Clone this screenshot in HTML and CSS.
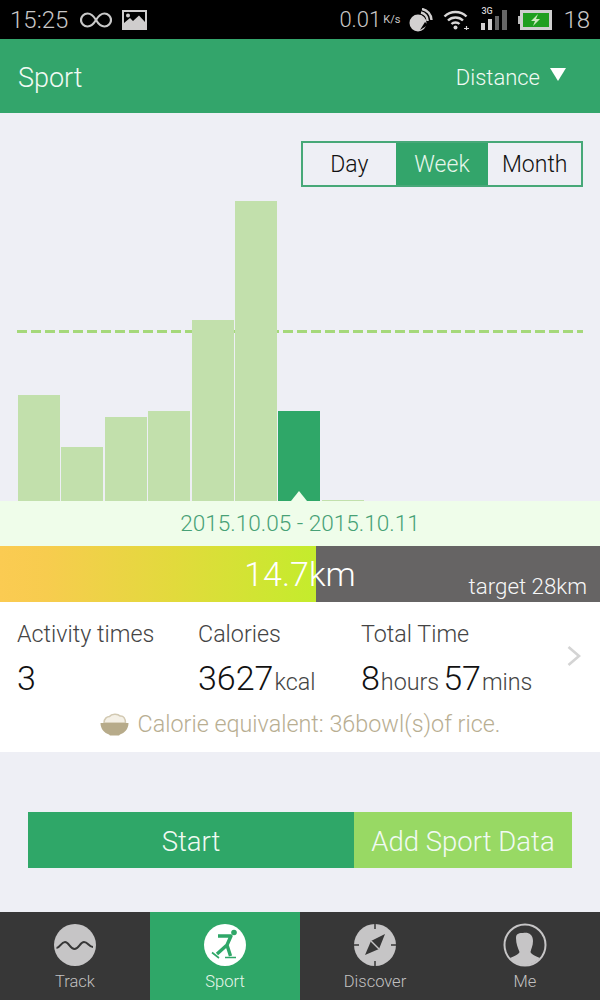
FILE: index.html
```html
<!DOCTYPE html>
<html lang="en">
<head>
<meta charset="utf-8">
<title>Sport</title>
<link rel="stylesheet" href="styles.css">
</head>
<body>
<div class="app">
  <div class="status">
    <div class="status-left">
      <span class="clock">15:25</span>
      <svg class="ic-inf" width="32" height="18" viewBox="0 0 32 18"><path d="M16 9C13 4 10.500 2.500 7.500 2.500A6.500 6.500 0 0 0 7.500 15.500C10.500 15.500 13 14 16 9C19 4 21.500 2.500 24.500 2.500A6.500 6.500 0 0 1 24.500 15.500C21.500 15.500 19 14 16 9Z" fill="none" stroke="#c8c8c8" stroke-width="2.200"/></svg>
      <svg class="ic-img" width="25" height="20" viewBox="0 0 25 20"><path fill="#cfcdcd" fill-rule="evenodd" d="M0 0H25V20H0ZM2 2V13L8 8L11 11L17 5.500L23 12V2ZM6 3.500A2 2 0 1 1 6 7.500A2 2 0 1 1 6 3.500Z"/></svg>
    </div>
    <div class="status-right">
      <span class="speed">0.01</span>
      <span class="speed-unit">K/s</span>
      <svg width="24" height="24" viewBox="0 0 24 24"><circle cx="9" cy="15" r="8.500" fill="#d2d0d0"/><path d="M11 22L16 14L19 17" fill="#000"/><path d="M12 4.500A8 8 0 0 1 18.500 13M13 1A11.500 11.500 0 0 1 22.500 12" fill="none" stroke="#d2d0d0" stroke-width="2.400"/></svg>
      <svg class="ic-wifi" width="26" height="21" viewBox="0 0 26 21"><path d="M1.500 7.500C7.500 1.500 17.500 1.500 23.500 7.500M5 11.500C9 7.500 16 7.500 20 11.500M8.500 15C10.500 13 14.500 13 16.500 15" fill="none" stroke="#d8d6d6" stroke-width="2.400"/><circle cx="12.500" cy="18.500" r="2" fill="#d8d6d6"/><path d="M21 19.500H26M23.500 17V21" stroke="#d8d6d6" stroke-width="1.200"/></svg>
      <div class="signal">
        <span class="net">3G</span>
        <svg width="27" height="20" viewBox="0 0 27 20"><path fill="#d2d0d0" d="M0 13H4V20H0ZM7 9H11V20H7Z"/><path fill="#666" d="M14 6H18V20H14ZM21 0H26V20H21Z"/></svg>
      </div>
      <svg class="ic-batt" width="34" height="20" viewBox="0 0 34 20"><path fill="#bdbdbd" d="M0 6H2V14H0Z"/><rect x="3.500" y="1.500" width="29" height="17" fill="#1f9e1f" stroke="#cfcfcf" stroke-width="3"/><path fill="#cfe8c0" d="M20 4L13 11H17L15 16L22 9H18Z"/></svg>
      <span class="level">18</span>
    </div>
  </div>

  <header class="topbar">
    <span class="title">Sport</span>
    <div class="metric">
      <span>Distance</span>
      <span class="tri-down"></span>
    </div>
  </header>

  <main class="main">
    <section class="chart">
      <div class="toggle">
        <span class="seg">Day</span>
        <span class="seg seg-on">Week</span>
        <span class="seg">Month</span>
      </div>
      <div class="target-line"></div>
      <div class="bars">
        <div class="bar" style="height:106px"></div>
        <div class="bar" style="height:54px"></div>
        <div class="bar" style="height:84px"></div>
        <div class="bar" style="height:90px"></div>
        <div class="bar" style="height:181px"></div>
        <div class="bar" style="height:300px"></div>
        <div class="bar bar-on" style="height:90px"><span class="pointer"></span></div>
        <div class="bar" style="height:1px"></div>
      </div>
    </section>

    <div class="dates">2015.10.05 - 2015.10.11</div>

    <div class="progress">
      <div class="fill"></div>
      <div class="rest"></div>
      <span class="value">14.7km</span>
      <span class="target">target 28km</span>
    </div>

    <section class="stats">
      <div class="stat-row">
        <div class="stat stat-a">
          <div class="label">Activity times</div>
          <div class="num">3</div>
        </div>
        <div class="stat stat-b">
          <div class="label">Calories</div>
          <div class="num">3627<small>kcal</small></div>
        </div>
        <div class="stat stat-c">
          <div class="label">Total Time</div>
          <div class="num">8<small>hours</small>57<small>mins</small></div>
        </div>
        <svg class="chev" width="16" height="24" viewBox="0 0 16 24"><path d="M2.500 3L13 12L2.500 21" fill="none" stroke="#d4d4d4" stroke-width="2.600"/></svg>
      </div>
      <div class="equiv">
        <svg width="29" height="24" viewBox="0 0 29 24"><path fill="#f4f0e6" stroke="#d2c9b2" stroke-width="1.500" d="M4 11C4 6 7.500 4.500 9.500 4.500C11.500 1.500 18 1.500 20 4C23.500 3.500 25.500 6.500 25.500 11Z"/><path fill="#b7ab8a" d="M0.500 11H28.500C28.500 17 24.500 21 20 22.500L19 23.500H10L9 22.500C4.500 21 0.500 17 0.500 11Z"/></svg>
        <span>Calorie equivalent: 36bowl(s)of rice.</span>
      </div>
    </section>

    <div class="actions">
      <button class="btn btn-start">Start</button>
      <button class="btn btn-add">Add Sport Data</button>
    </div>
  </main>

  <nav class="tabs">
    <div class="tab">
      <svg width="44" height="44" viewBox="0 0 44 44"><circle cx="22" cy="22" r="21" fill="#c6c5c6"/><path d="M3.500 25C7 25 8 19 12 19C16 19 17 26 21.500 26C26 26 27 19 31 19C35 19 36 24 40 24" fill="none" stroke="#373737" stroke-width="2"/></svg>
      <span>Track</span>
    </div>
    <div class="tab tab-on">
      <svg width="44" height="44" viewBox="0 0 44 44"><circle cx="22" cy="22" r="21" fill="#fff"/><circle cx="31" cy="9.500" r="2.800" fill="#2fa768"/><path d="M15 13H28L24 22L14 31M24 22L27.500 33" fill="none" stroke="#2fa768" stroke-width="3.400" stroke-linejoin="round"/><path d="M9 29.500L16 35M22 34.500H33" fill="none" stroke="#2fa768" stroke-width="1.600"/></svg>
      <span>Sport</span>
    </div>
    <div class="tab">
      <svg width="44" height="44" viewBox="0 0 44 44"><circle cx="22" cy="22" r="21" fill="#c6c5c6"/><path d="M22 0V6M22 38V44M0 22H6M38 22H44" stroke="#373737" stroke-width="1.500"/><path d="M32 11L26 26L12 32L18 18Z" fill="#373737"/><path d="M18 18L26 26" stroke="#c6c5c6" stroke-width="1.500"/></svg>
      <span>Discover</span>
    </div>
    <div class="tab">
      <svg width="44" height="44" viewBox="0 0 44 44"><circle cx="22" cy="22" r="20.500" fill="none" stroke="#c6c5c6" stroke-width="2"/><path fill="#c6c5c6" d="M13 15C13 10 17 10 20 10C25 9 30 11 30 18C30 23 28 26 27.500 29C28 31 32 33 37 35C32 40 27 42 22 42C16 42 11 40 7 35C12 33 16 31 16.500 29C15 25 13 21 13 15Z"/></svg>
      <span>Me</span>
    </div>
  </nav>
</div>
</body>
</html>
```
FILE: styles.css
```css
* { box-sizing: border-box; }
html, body { margin: 0; padding: 0; }
body { width: 600px; height: 1000px; overflow: hidden; font-family: Roboto, "Liberation Sans", sans-serif; font-weight: 300; background: #eeeff5; }
.app { width: 600px; height: 1000px; display: flex; flex-direction: column; }

.status { flex: 0 0 39px; background: #000; color: #c9c7c7; display: flex; justify-content: space-between; align-items: center; padding: 0 10px 0 10px; font-size: 24px; }
.status-left, .status-right { display: flex; align-items: center; }
.clock { width: 70px; }
.ic-img { margin-left: 10px; }
.speed { margin-right: 2px; font-size: 22px; }
.speed-unit { font-size: 11px; font-weight: 400; margin-right: 9px; }
.ic-wifi { margin-left: 10px; }
.signal { position: relative; margin-left: 12px; display: flex; }
.net { position: absolute; left: 0; top: -4px; font-size: 9px; font-weight: 500; line-height: 10px; color: #d2d0d0; }
.ic-batt { margin-left: 10px; }
.level { margin-left: 11px; }

.topbar { flex: 0 0 74px; background: #33a56b; color: #f1faf3; display: flex; justify-content: space-between; align-items: center; padding: 0 34px 0 18px; }
.title { font-size: 27px; margin-top: 4px; }
.metric { display: flex; align-items: center; font-size: 22px; gap: 10px; margin-top: 2px; }
.tri-down { width: 0; height: 0; border-left: 8px solid transparent; border-right: 8px solid transparent; border-top: 13px solid #fff; margin-top: -5px; }

.main { flex: 1; display: flex; flex-direction: column; background: #eeeff5; }

.chart { position: relative; height: 388px; display: flex; flex-direction: column; }
.toggle { align-self: flex-end; margin: 28px 17px 0 0; width: 282px; height: 46px; display: flex; border: 2px solid #47a878; color: #111; font-size: 23px; }
.seg { flex: 1; display: flex; align-items: center; justify-content: center; }
.seg-on { background: #33a56b; color: #e6f6ea; }

.target-line { position: absolute; left: 17px; right: 17px; top: 217px; height: 3px; background: repeating-linear-gradient(90deg, #a5d87a 0, #a5d87a 10px, transparent 10px, transparent 14px); }
.bars { position: relative; margin-top: auto; display: flex; align-items: flex-end; padding-left: 18px; gap: 1.400px; }
.bar { position: relative; width: 42px; background: #c2e0ac; }
.bar-on { background: #2fa768; }
.pointer { position: absolute; left: 13px; bottom: 0; width: 0; height: 0; border-left: 8px solid transparent; border-right: 8px solid transparent; border-bottom: 10px solid #effdea; }

.dates { height: 45px; background: #effdea; color: #47a176; font-size: 22.600px; display: flex; align-items: center; justify-content: center; }

.progress { position: relative; height: 56px; display: flex; }
.fill { width: 316px; background: linear-gradient(90deg, #fbcb52 0%, #f7cc4e 15%, #e2da3c 55%, #c4ec2c 100%); }
.rest { flex: 1; background: #666464; }
.value { position: absolute; left: 0; right: 0; top: 8px; text-align: center; font-size: 34px; color: #fff; line-height: 40px; }
.target { position: absolute; right: 13px; bottom: 3px; font-size: 22.300px; color: #f7f7f7; }

.stats { background: #fff; height: 150px; padding-top: 17px; }
.stat-row { display: flex; position: relative; height: 81px; padding-left: 17px; }
.stat-a { width: 181px; }
.stat-b { width: 163px; }
.label { font-size: 23.300px; color: #444; line-height: 30px; }
.num { font-size: 34px; color: #111; line-height: 44px; margin-top: 7px; white-space: nowrap; }
.num small { font-size: 23.300px; margin: 0 4px 0 1px; color: #444; }
.chev { position: absolute; right: 18px; top: 25px; }
.equiv { display: flex; align-items: center; justify-content: center; gap: 9px; font-size: 23.350px; color: #b8ae92; margin-top: 10px; }

.actions { display: flex; margin: 60px 28px 0; height: 56px; }
.btn { border: 0; padding: 2px 0 0; font: inherit; font-size: 27.500px; color: #f1faf3; display: block; }
.btn-start { width: 326px; background: #2fa768; }
.btn-add { width: 218px; background: #98d964; }

.tabs { margin-top: auto; flex: 0 0 88px; background: #373737; display: flex; }
.tab { flex: 1; display: flex; flex-direction: column; align-items: center; padding-top: 11px; color: #c2c1c1; font-size: 16.500px; gap: 5px; }
.tab svg { display: block; }
.tab-on { background: #2fa768; color: #e8f6ea; }
```
